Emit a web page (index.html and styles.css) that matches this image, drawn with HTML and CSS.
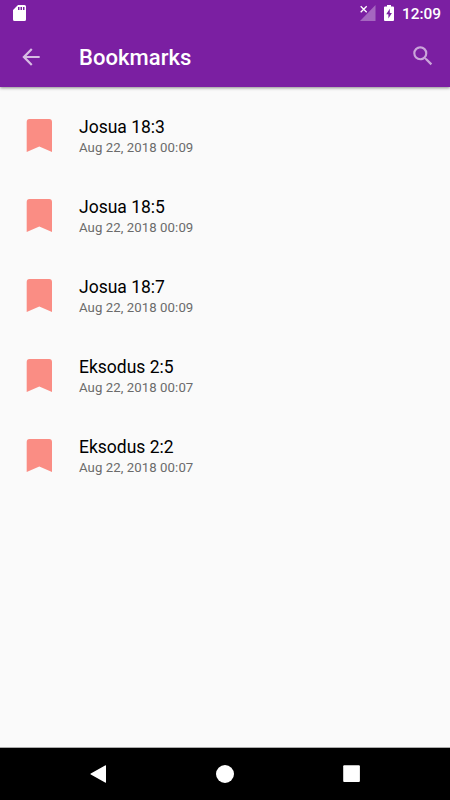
FILE: index.html
```html
<!DOCTYPE html>
<html lang="en">
<head>
<meta charset="utf-8">
<title>Bookmarks</title>
<link rel="stylesheet" href="styles.css">
</head>
<body>
<div class="screen">
  <header class="header">
    <div class="status">
      <svg class="sd" width="13" height="16" viewBox="0 0 13 16"><path fill="#fff" fill-rule="evenodd" d="M5 0h6.500Q13 0 13 1.500V14.500Q13 16 11.500 16h-10Q0 16 0 14.500V5zM5 2v3h1.500V2zM7.500 2v3H9V2zM10 2v3h1.500V2z"/></svg>
      <svg class="signal" width="16" height="16" viewBox="0 0 16 16"><path fill="#fff" fill-opacity=".32" d="M15.500 0v16H0z"/><path stroke="#7b1fa2" stroke-width="3" d="M0 1l7 7M7 1L0 8"/><path stroke="#fff" stroke-width="1.300" d="M.7 1.200l6 6M6.700 1.200l-6 6"/></svg>
      <svg class="battery" width="10" height="16" viewBox="0 0 10 16"><path fill="#fff" fill-rule="evenodd" d="M3 0h4v1.500h2q1 0 1 1V15q0 1-1 1H1q-1 0-1-1V2.500q0-1 1-1h2zM5.800 3.800L2.200 9.200h2.200v4.300L7.900 8H5.800z"/></svg>
      <span class="clock">12:09</span>
    </div>
    <div class="toolbar">
      <svg class="back" width="26" height="26" viewBox="0 0 24 24"><path fill="#fff" fill-opacity=".7" d="M20 11H7.830l5.590-5.590L12 4l-8 8 8 8 1.410-1.410L7.830 13H20v-2z"/></svg>
      <h1 class="title">Bookmarks</h1>
      <svg class="search" width="26" height="26" viewBox="0 0 24 24"><path fill="#fff" fill-opacity=".6" d="M15.500 14h-.79l-.28-.27A6.471 6.471 0 0 0 16 9.500 6.500 6.500 0 1 0 9.500 16c1.610 0 3.090-.59 4.230-1.570l.27.28v.79l5 4.990L20.490 19l-4.990-5zm-6 0C7.010 14 5 11.990 5 9.500S7.010 5 9.500 5 14 7.010 14 9.500 11.990 14 9.500 14z"/></svg>
    </div>
  </header>
  <main class="list">
    <article class="row"><svg class="mark" viewBox="0 0 26 33"><path d="M3.500 0h19.700q2.800 0 2.800 3v30l-12.700-5.500L.7 33V3q0-3 2.800-3z"/></svg><div><div class="name">Josua 18:3</div><div class="date">Aug 22, 2018 00:09</div></div></article>
    <article class="row"><svg class="mark" viewBox="0 0 26 33"><path d="M3.500 0h19.700q2.800 0 2.800 3v30l-12.700-5.500L.7 33V3q0-3 2.800-3z"/></svg><div><div class="name">Josua 18:5</div><div class="date">Aug 22, 2018 00:09</div></div></article>
    <article class="row"><svg class="mark" viewBox="0 0 26 33"><path d="M3.500 0h19.700q2.800 0 2.800 3v30l-12.700-5.500L.7 33V3q0-3 2.800-3z"/></svg><div><div class="name">Josua 18:7</div><div class="date">Aug 22, 2018 00:09</div></div></article>
    <article class="row"><svg class="mark" viewBox="0 0 26 33"><path d="M3.500 0h19.700q2.800 0 2.800 3v30l-12.700-5.500L.7 33V3q0-3 2.800-3z"/></svg><div><div class="name">Eksodus 2:5</div><div class="date">Aug 22, 2018 00:07</div></div></article>
    <article class="row"><svg class="mark" viewBox="0 0 26 33"><path d="M3.500 0h19.700q2.800 0 2.800 3v30l-12.700-5.500L.7 33V3q0-3 2.800-3z"/></svg><div><div class="name">Eksodus 2:2</div><div class="date">Aug 22, 2018 00:07</div></div></article>
  </main>
  <nav class="nav">
    <svg width="18" height="18" viewBox="0 0 18 18"><path fill="#fff" d="M15.500.3q.5-.3.500.4v16.600q0 .7-.5.400L.8 9.500q-.8-.5 0-1z"/></svg>
    <svg width="18" height="18" viewBox="0 0 18 18"><circle cx="9" cy="9" r="9" fill="#fff"/></svg>
    <svg width="18" height="18" viewBox="0 0 18 18"><rect x="1.200" y=".3" width="16.700" height="16.700" rx="1" fill="#fff"/></svg>
  </nav>
</div>
</body>
</html>
```
FILE: styles.css
```css
* { box-sizing: border-box; }
body { margin: 0; font-family: Roboto, "Liberation Sans", sans-serif; }
svg { display: block; flex: none; }
.screen { width: 450px; height: 800px; display: flex; flex-direction: column; background: #fafafa; overflow: hidden; }
.header { height: 87px; flex: none; background: #7b1fa2; box-shadow: 0 1px 3px rgba(0, 0, 0, .45); color: #fff; }
.status { height: 26px; display: flex; align-items: flex-start; padding: 5px 9px 0 13px; }
.signal { margin: 0 8px 0 auto; }
.battery { margin-right: 8px; }
.clock { font-size: 15.4px; font-weight: 500; line-height: 18px; }
.toolbar { height: 61px; display: flex; align-items: center; padding: 0 14px 0 18px; }
.title { margin: 2px auto 0 35px; font-size: 22px; font-weight: 500; line-height: 26px; letter-spacing: .05px; }
.search { margin-top: -1px; }
.list { flex: 1; padding-top: 8px; }
.row { height: 80px; display: flex; align-items: flex-start; padding: 24px 26px 0; }
.mark { width: 26px; height: 33px; margin-right: 27px; fill: #fa8d84; }
.name { margin: -3px 0 1px; font-size: 17.5px; line-height: 22px; color: #000; }
.date { font-size: 13.2px; line-height: 18px; letter-spacing: .08px; color: #6b6b6b; }
.nav { height: 53px; flex: none; display: flex; justify-content: space-between; align-items: center; padding: 0 90px; background: #000; border-top: 1px solid #aaa; }
```
